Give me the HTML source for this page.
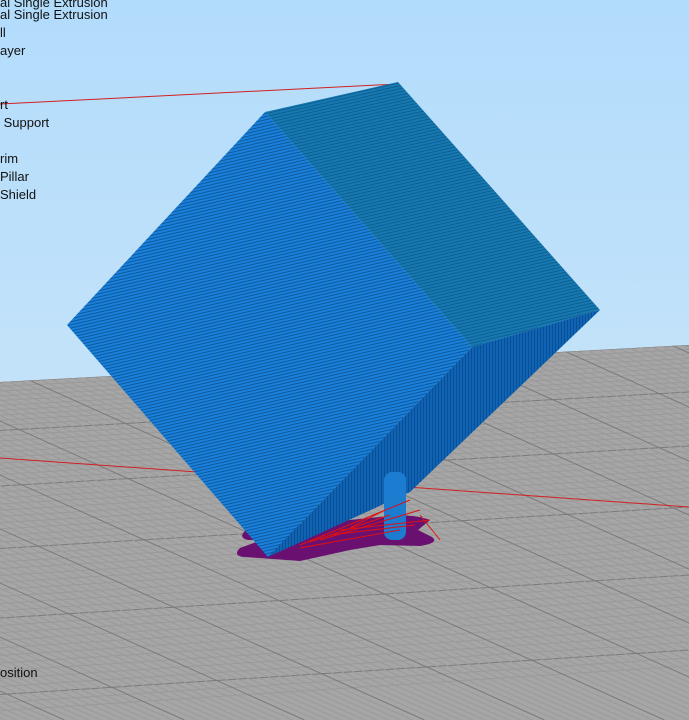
<!DOCTYPE html>
<html><head><style>
html,body{margin:0;padding:0;width:689px;height:720px;overflow:hidden;font-family:"Liberation Sans",sans-serif;}
body{position:fixed;left:0;top:0;}
.t{position:absolute;font-size:13px;color:#111;line-height:14px;white-space:nowrap;}
</style></head><body>
<svg width="689" height="720" style="position:absolute;left:0;top:0;display:block">
<defs>
<linearGradient id="sky" x1="0" y1="0" x2="0" y2="1">
<stop offset="0" stop-color="#b2dcfc"/><stop offset="1" stop-color="#d2e8f6"/>
</linearGradient>
<pattern id="pf" width="6" height="3" patternUnits="userSpaceOnUse" patternTransform="rotate(-13)">
<rect width="6" height="3" fill="#1a80dc"/><rect y="2" width="6" height="1" fill="#0d5a9c"/>
</pattern>
<pattern id="pt" width="4" height="3" patternUnits="userSpaceOnUse" patternTransform="rotate(-13)">
<rect width="4" height="3" fill="#1679b4"/><rect y="2" width="4" height="1" fill="#0f5f8c"/>
</pattern>
<pattern id="pb" width="3" height="3" patternUnits="userSpaceOnUse">
<rect width="3" height="3" fill="#0f63b4"/><rect width="1" height="3" fill="#0a4f94"/>
</pattern>
<clipPath id="gc"><polygon points="0,382 689,345 689,720 0,720"/></clipPath>
</defs>
<rect width="689" height="720" fill="url(#sky)"/>
<polygon points="0,382 689,345 689,720 0,720" fill="#a6a6a6"/>
<g id="grid" clip-path="url(#gc)"></g>
<line x1="0" y1="104" x2="398" y2="84" stroke="#d02020" stroke-width="1"/>
<line x1="0" y1="458" x2="689" y2="507" stroke="#d02020" stroke-width="1"/>
<path d="M245,531 Q238,538 248,540 L262,540 L240,548 Q232,556 245,557 L300,561 L350,550 L380,545 L420,546 Q440,543 432,537 L418,530 L430,520 Q420,516 400,515 L300,525 Z" fill="#6a1070"/>
<polygon points="265,112 398,82 600,310 472,347" fill="url(#pt)"/>
<polygon points="472,347 600,310 410,492 268,557" fill="url(#pb)"/>
<polygon points="265,112 67,325 268,557 472,347" fill="url(#pf)"/>
<rect x="384" y="472" width="22" height="68" rx="8" fill="#1b7cd0"/>
<g stroke="#e01010" stroke-width="1">
<line x1="300" y1="545" x2="410" y2="500"/><line x1="320" y1="540" x2="420" y2="510"/>
<line x1="330" y1="535" x2="415" y2="525"/><line x1="300" y1="548" x2="400" y2="530"/>
<line x1="340" y1="530" x2="430" y2="520"/><line x1="420" y1="515" x2="440" y2="540"/>
<line x1="310" y1="542" x2="390" y2="515"/><line x1="350" y1="528" x2="385" y2="510"/>
</g>
</svg>
<script>
(function(){
var g=document.getElementById('grid'),s='';
for(var k=0;k<53;k++){var y=382+4.5*k+0.035*k*k;var c=k%10==0?'#7a7a7a':'#9a9a9a';
s+='<line x1="0" y1="'+y+'" x2="689" y2="'+(y-37-k*0.15)+'" stroke="'+c+'"/>';}
for(var k=0;k<160;k++){var x=-900+12*k;var c=k%10==0?'#7a7a7a':'#9a9a9a';
s+='<line x1="'+x+'" y1="340" x2="'+(x+380/0.45)+'" y2="720" stroke="'+c+'"/>';}
g.innerHTML=s;
})();
</script>
<div class="t" style="left:0;top:-4px">al Single Extrusion</div>
<div class="t" style="left:0;top:8px">al Single Extrusion</div>
<div class="t" style="left:0;top:26px">ll</div>
<div class="t" style="left:0;top:44px">ayer</div>
<div class="t" style="left:0;top:98px">rt</div>
<div class="t" style="left:0;top:116px">&nbsp;Support</div>
<div class="t" style="left:0;top:152px">rim</div>
<div class="t" style="left:0;top:170px">Pillar</div>
<div class="t" style="left:0;top:188px">Shield</div>
<div class="t" style="left:0;top:666px">osition</div>
</body></html>
